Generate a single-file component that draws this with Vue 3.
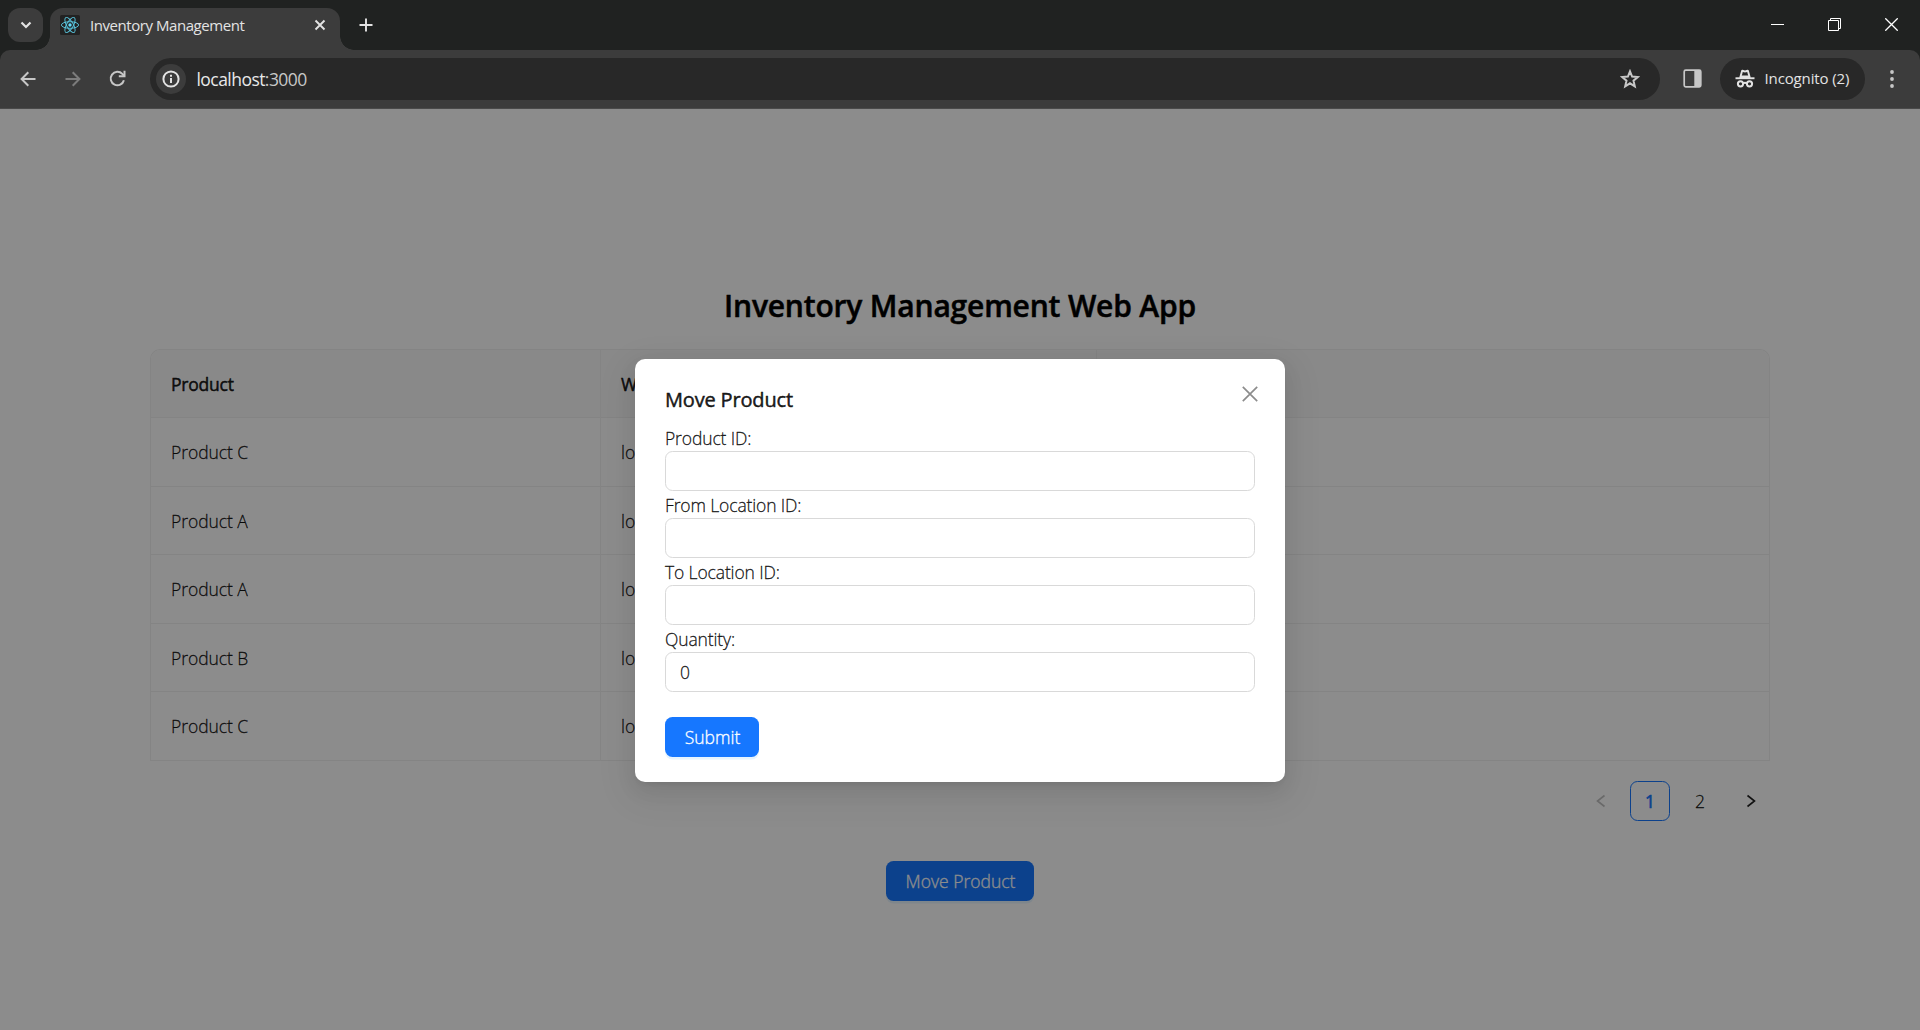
<script setup>
import { ref } from 'vue'

const rows = ref([
  { id: 1, product: 'Product C', place: 'loc' },
  { id: 2, product: 'Product A', place: 'loc' },
  { id: 3, product: 'Product A', place: 'loc' },
  { id: 4, product: 'Product B', place: 'loc' },
  { id: 5, product: 'Product C', place: 'loc' },
])

const fields = ref([
  { label: 'Product ID:', value: '' },
  { label: 'From Location ID:', value: '' },
  { label: 'To Location ID:', value: '' },
  { label: 'Quantity:', value: '0' },
])
</script>

<template>
  <div class="window">
    <header class="tabstrip">
      <button class="tab-search" aria-label="Search tabs">
        <svg width="12" height="8" viewBox="0 0 12 8"><path d="M1.500 1.500 6 6l4.500-4.500" /></svg>
      </button>
      <div class="tab">
        <svg class="favicon" width="20" height="20" viewBox="0 0 20 20">
          <rect width="20" height="20" rx="1.500" fill="#222" />
          <g fill="none" stroke="#58c4dc" stroke-width="0.950">
            <ellipse cx="10" cy="10" rx="8.600" ry="3.300" />
            <ellipse cx="10" cy="10" rx="8.600" ry="3.300" transform="rotate(60 10 10)" />
            <ellipse cx="10" cy="10" rx="8.600" ry="3.300" transform="rotate(120 10 10)" />
          </g>
          <circle cx="10" cy="10" r="1.700" fill="#61dafb" />
        </svg>
        <span class="tab-title">Inventory Management</span>
        <svg class="tab-close" width="12" height="12" viewBox="0 0 12 12"><path d="M1.500 1.500l9 9M10.500 1.500l-9 9" /></svg>
      </div>
      <svg class="new-tab" width="14" height="14" viewBox="0 0 14 14"><path d="M7 .5v13M.5 7h13" /></svg>
      <div class="controls">
        <svg width="13" height="13" viewBox="0 0 13 13"><path d="M0 6.500h13" /></svg>
        <svg width="13" height="13" viewBox="0 0 13 13"><path d="M.5 2.500h10v10h-10zM2.500 2.500v-2h10v10h-2" /></svg>
        <svg width="13" height="13" viewBox="0 0 13 13"><path d="M.3.3l12.400 12.400M12.700.3.3 12.700" stroke-width="1.300" /></svg>
      </div>
    </header>

    <nav class="toolbar">
      <div class="nav-icons">
        <svg width="16" height="16" viewBox="0 0 16 16"><path d="M15.500 8H2M8.300 1.300 1.600 8l6.700 6.700" /></svg>
        <svg class="dim" width="16" height="16" viewBox="0 0 16 16"><path d="M.5 8H14M7.700 1.300 14.400 8l-6.700 6.700" /></svg>
        <svg width="17" height="17" viewBox="0 0 17 17"><path d="M14.900 10.200A6.700 6.700 0 1 1 13.300 3.900L15 5.700" /><path d="M15.500 .8V6.200h-5.700" /></svg>
      </div>
      <div class="omnibox">
        <span class="site-info">
          <svg width="18" height="18" viewBox="0 0 18 18"><circle cx="9" cy="9" r="7.600" /><path d="M9 8v5M9 4.800v1.900" /></svg>
        </span>
        <span class="url"><b>localhost</b>:3000</span>
        <svg class="star" width="20" height="20" viewBox="0 0 20 20"><path d="M10 2.300l2.100 5.200 5.700.5-4.300 3.700 1.300 5.600L10 14.300l-4.800 3 1.300-5.600L2.200 8l5.700-.5z" /></svg>
      </div>
      <svg class="panel" width="19" height="19" viewBox="0 0 19 19"><rect x="1.200" y="1.200" width="16.600" height="16.600" rx="1.500" /><path d="M11.300 1h6v17h-6z" fill="#c7c7c7" stroke="none" /></svg>
      <div class="incognito">
        <svg width="20" height="19" viewBox="0 0 20 19">
          <path d="M.5 8.300h19v1.900H.5z" fill="#e3e3e3" />
          <path d="M4.300 8.500 6.200 1.600Q6.600.5 7.700.8L10 1.500l2.300-.7q1.100-.3 1.500.8l1.900 6.900h-2L12.200 3 10 3.600 7.800 3 6.300 8.500z" fill="#e3e3e3" />
          <path d="M5.300 6.600h9.400l.8 2.300h-11z" fill="#e3e3e3" />
          <g fill="none" stroke="#e3e3e3" stroke-width="2"><circle cx="5.500" cy="14.800" r="2.600" /><circle cx="14.500" cy="14.800" r="2.600" /><path d="M8 14.400q2-1.100 4 0" /></g>
        </svg>
        <span>Incognito (2)</span>
      </div>
      <svg class="menu" width="4" height="18" viewBox="0 0 4 18"><circle cx="2" cy="2" r="1.900" /><circle cx="2" cy="9" r="1.900" /><circle cx="2" cy="16" r="1.900" /></svg>
    </nav>

    <main class="page">
      <h1>Inventory Management Web App</h1>
      <div class="table">
        <div class="row head"><span>Product</span><span>W</span><span></span></div>
        <div v-for="row in rows" :key="row.id" class="row">
          <span>{{ row.product }}</span><span>{{ row.place }}</span><span></span>
        </div>
      </div>
      <div class="pagination">
        <span class="disabled"><svg width="10" height="14" viewBox="0 0 10 14"><path d="M8.500 1.500 1.500 7l7 5.500" /></svg></span>
        <span class="current">1</span>
        <span>2</span>
        <span><svg width="10" height="14" viewBox="0 0 10 14"><path d="M1.500 1.500 8.500 7l-7 5.500" /></svg></span>
      </div>
      <button class="primary open">Move Product</button>

      <div class="mask">
        <section class="modal" role="dialog">
          <svg class="modal-close" width="16" height="16" viewBox="0 0 16 16"><path d="M.8.8l14.400 14.400M15.200.8.8 15.200" /></svg>
          <h2>Move Product</h2>
          <label v-for="field in fields" :key="field.label">
            <span>{{ field.label }}</span>
            <input v-model="field.value" type="text" />
          </label>
          <button class="primary submit">Submit</button>
        </section>
      </div>
    </main>
  </div>
</template>

<style>
body {
  overflow: hidden;
}
</style>

<style scoped>
* {
  box-sizing: border-box;
}
.window {
  display: flex;
  flex-direction: column;
  width: 1920px;
  height: 1030px;
  background: #202221;
  font-family: "Open Sans", "Noto Sans", sans-serif;
}
svg {
  display: block;
  flex: none;
  fill: none;
}
button {
  border: 0;
  font: inherit;
}

/* Browser frame */
.tabstrip {
  display: flex;
  align-items: flex-start;
  height: 50px;
  padding: 8px 22px 0 8px;
}
.tab-search {
  display: flex;
  align-items: center;
  justify-content: center;
  width: 35px;
  height: 34px;
  margin-right: 7px;
  padding: 0;
  border-radius: 12px;
  background: #3c3c3c;
}
.tab-search svg {
  stroke: #e3e3e3;
  stroke-width: 2.2;
}
.tab {
  position: relative;
  display: flex;
  align-items: center;
  width: 290px;
  height: 42px;
  padding: 0 14px 9px 10px;
  border-radius: 13px 13px 0 0;
  background: #3c3c3c;
}
.tab::before,
.tab::after {
  content: "";
  position: absolute;
  bottom: 0;
  width: 14px;
  height: 14px;
}
.tab::before {
  left: -14px;
  background: radial-gradient(circle at 0 0, transparent 13.500px, #3c3c3c 14px);
}
.tab::after {
  right: -14px;
  background: radial-gradient(circle at 100% 0, transparent 13.500px, #3c3c3c 14px);
}
.tab-title {
  flex: 1;
  margin-left: 10px;
  color: #e3e3e3;
  font-size: 15px;
  line-height: 20px;
  letter-spacing: -0.44px;
}
.tab-close {
  stroke: #e3e3e3;
  stroke-width: 1.9;
}
.new-tab {
  margin: 10px 0 0 18.500px;
  stroke: #e3e3e3;
  stroke-width: 1.9;
}
.controls {
  display: flex;
  gap: 44px;
  margin: 10px 0 0 auto;
}
.controls svg {
  stroke: #fff;
  stroke-width: 1;
}
.toolbar {
  display: flex;
  align-items: center;
  height: 59px;
  padding: 0 26px 1px 20px;
  border-bottom: 1px solid #4a4a4a;
  border-radius: 10px 10px 0 0;
  background: #3c3c3c;
}
.nav-icons {
  display: flex;
  align-items: center;
  gap: 28.500px;
  width: 130px;
  stroke: #c7c7c7;
  stroke-width: 2;
}
.dim {
  stroke: #7c7c7c;
}
.omnibox {
  display: flex;
  align-items: center;
  width: 1510px;
  height: 42px;
  padding: 0 20px 0 6px;
  border-radius: 21px;
  background: #282828;
}
.site-info {
  display: flex;
  align-items: center;
  justify-content: center;
  width: 30px;
  height: 30px;
  border-radius: 50%;
  background: #3c3c3c;
}
.site-info svg {
  stroke: #e3e3e3;
  stroke-width: 2;
}
.url {
  flex: 1;
  margin-left: 10.500px;
  color: #c7c7c7;
  font-size: 17.500px;
  line-height: 24px;
  letter-spacing: -0.55px;
}
.url b {
  color: #e8e8e8;
  font-weight: 400;
}
.star {
  stroke: #c7c7c7;
  stroke-width: 2;
}
.panel {
  margin-left: 23px;
  stroke: #c7c7c7;
  stroke-width: 1.7;
}
.incognito {
  display: flex;
  align-items: center;
  gap: 9.500px;
  width: 145px;
  height: 42px;
  margin-left: 18px;
  padding-left: 15px;
  border-radius: 21px;
  background: #282828;
  color: #e3e3e3;
  font-size: 15px;
  line-height: 20px;
  letter-spacing: -0.13px;
}
.incognito span {
  margin-bottom: 2px;
}
.menu {
  margin-left: auto;
  fill: #c7c7c7;
}

/* Page */
.page {
  position: relative;
  flex: 1;
  padding: 0 150px;
  background: #fff;
  color: rgba(0, 0, 0, 0.88);
  font-size: 17.500px;
  font-weight: 300;
  line-height: 27px;
  -webkit-text-stroke: 0.3px;
}
h1 {
  margin: 177px 0 0;
  color: #000;
  font-size: 30px;
  font-weight: 600;
  line-height: 40px;
  letter-spacing: -0.18px;
  text-align: center;
  -webkit-text-stroke: 0.5px;
}
.table {
  margin-top: 23px;
  overflow: hidden;
  border: solid #f0f0f0;
  border-width: 1px 1px 0;
  border-radius: 10px 10px 0 0;
}
.row {
  display: grid;
  grid-template-columns: 450px 496px 1fr;
  height: 68px;
}
.row:nth-child(even) {
  height: 69px;
}
.row span {
  padding: 21px 20px 0;
  border-right: 1px solid #f0f0f0;
  border-bottom: 1px solid #f0f0f0;
  letter-spacing: -0.05px;
}
.row span:last-child {
  border-right: 0;
}
.head {
  background: #fafafa;
  font-weight: 400;
  -webkit-text-stroke: 0.5px;
}
.head span {
  letter-spacing: -0.22px;
}
.pagination {
  display: flex;
  justify-content: flex-end;
  gap: 10px;
  margin-top: 20px;
}
.pagination span {
  display: flex;
  align-items: center;
  justify-content: center;
  width: 40px;
  height: 40px;
  padding-top: 1px;
  border-radius: 7.500px;
}
.pagination svg {
  margin: -1px 0 0 1px;
  stroke: rgba(0, 0, 0, 0.88);
  stroke-width: 1.6;
}
.pagination .disabled svg {
  stroke: rgba(0, 0, 0, 0.25);
}
.pagination .current {
  border: 1px solid #1677ff;
  color: #1677ff;
  font-weight: 400;
  -webkit-text-stroke: 0.6px;
}
.primary {
  display: block;
  height: 40px;
  padding: 0 0 0 1px;
  border-radius: 7.500px;
  background: #1677ff;
  color: #fff;
  line-height: 28px;
  box-shadow: 0 2.500px 0 rgba(5, 145, 255, 0.1);
}
.open {
  width: 148px;
  margin: 40px auto 0;
}

/* Dialog */
.mask {
  position: absolute;
  inset: 0;
  display: flex;
  align-items: flex-start;
  justify-content: center;
  padding-top: 250px;
  background: rgba(0, 0, 0, 0.45);
}
.modal {
  position: relative;
  width: 650px;
  height: 423px;
  padding: 26px 30px 25px;
  border-radius: 10px;
  background: #fff;
  box-shadow: 0 7.500px 20px rgba(0, 0, 0, 0.08), 0 4px 7.500px -5px rgba(0, 0, 0, 0.12), 0 11px 35px 10px rgba(0, 0, 0, 0.05);
}
.modal-close {
  position: absolute;
  top: 27px;
  right: 27px;
  stroke: rgba(0, 0, 0, 0.45);
  stroke-width: 1.7;
}
h2 {
  margin: 0 0 9px;
  font-size: 20px;
  font-weight: 400;
  line-height: 30px;
  letter-spacing: -0.17px;
  -webkit-text-stroke: 0.5px;
}
label {
  display: block;
  height: 67px;
}
label span {
  display: block;
  height: 27px;
  padding-top: 1px;
  letter-spacing: -0.13px;
}
input {
  display: block;
  width: 590px;
  height: 40px;
  padding: 0 14px;
  border: 1px solid #d9d9d9;
  border-radius: 7.500px;
  outline: 0;
  background: #fff;
  color: inherit;
  font: inherit;
  -webkit-text-stroke: 0.3px;
}
.submit {
  width: 94px;
  margin-top: 25px;
}
</style>
